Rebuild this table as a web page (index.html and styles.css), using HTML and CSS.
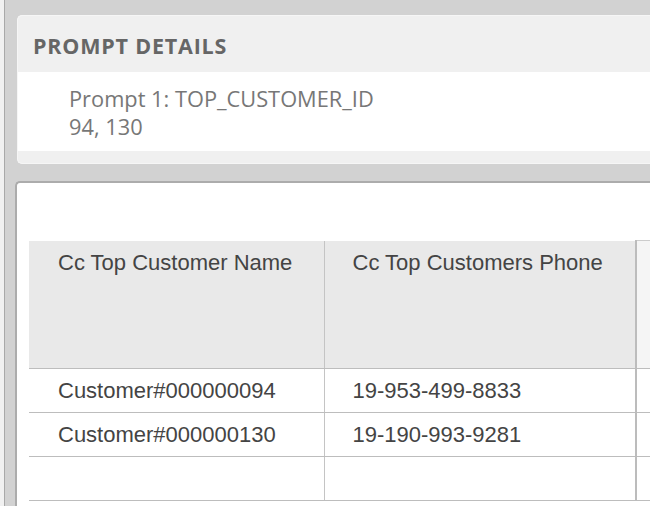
FILE: index.html
```html
<!DOCTYPE html>
<html>
<head>
<meta charset="utf-8">
<link rel="stylesheet" href="styles.css">
</head>
<body>
<div class="page">
  <div class="edge"></div>
  <div class="main">
    <section class="prompt-panel">
      <div class="prompt-head">PROMPT DETAILS</div>
      <div class="prompt-body">
        <div class="prompt-line">Prompt 1: TOP_CUSTOMER_ID</div>
        <div class="prompt-line">94, 130</div>
      </div>
      <div class="prompt-foot"></div>
    </section>
    <section class="grid-panel">
      <table class="grid">
        <colgroup>
          <col class="c1"><col class="c2"><col class="c3">
        </colgroup>
        <thead>
          <tr>
            <th class="cell first">Cc Top Customer Name</th>
            <th class="cell">Cc Top Customers Phone</th>
            <th class="cell extra"></th>
          </tr>
        </thead>
        <tbody>
          <tr>
            <td class="cell first">Customer#000000094</td>
            <td class="cell">19-953-499-8833</td>
            <td class="cell extra-body"></td>
          </tr>
          <tr>
            <td class="cell first">Customer#000000130</td>
            <td class="cell">19-190-993-9281</td>
            <td class="cell extra-body"></td>
          </tr>
          <tr>
            <td class="cell first">&nbsp;</td>
            <td class="cell">&nbsp;</td>
            <td class="cell extra-body"></td>
          </tr>
        </tbody>
      </table>
    </section>
  </div>
</div>
</body>
</html>
```

FILE: styles.css
```css
html, body {
  margin: 0;
  padding: 0;
  width: 650px;
  height: 506px;
  overflow: hidden;
  background: #d2d2d2;
}

.page {
  display: flex;
  height: 506px;
}

.edge {
  width: 4px;
  flex: none;
  background: #f1f1f1;
  border-right: 1px solid #a9a9a9;
}

.main {
  flex: 1;
  min-width: 0;
  padding: 15px 0 0 10px;
  display: flex;
  flex-direction: column;
}

.prompt-panel {
  margin-left: 2px;
  background: #ffffff;
  border: 1px solid #f6f6f6;
  border-right: none;
  border-radius: 5px 0 0 5px;
  overflow: hidden;
}

.prompt-head {
  height: 56px;
  box-sizing: border-box;
  padding: 16px 0 0 15px;
  background: #f0f0f0;
  font-family: "Open Sans", "DejaVu Sans", sans-serif;
  font-weight: 700;
  font-size: 21.5px;
  letter-spacing: 0.8px;
  line-height: 28px;
  color: #666666;
}

.prompt-body {
  padding: 13px 0 10px 51px;
  font-family: "Open Sans", "DejaVu Sans", sans-serif;
  font-size: 21.8px;
  line-height: 28px;
  color: #777777;
}

.prompt-foot {
  height: 12px;
  background: #f0f0f0;
}

.grid-panel {
  margin-top: 17px;
  flex: 1;
  background: #ffffff;
  border-top: 2px solid #acacac;
  border-left: 2px solid #acacac;
  border-radius: 5px 0 0 0;
  padding: 57px 0 0 12px;
  overflow: hidden;
}

.grid {
  border-collapse: collapse;
  table-layout: fixed;
  width: 810px;
  font-family: "Liberation Sans", Arial, sans-serif;
  font-size: 22px;
  color: #444444;
}

.c1 { width: 295px; }
.c2 { width: 312px; }
.c3 { width: 203px; }

.cell {
  text-align: left;
  font-weight: 400;
  padding: 9px 0 9px 28px;
  line-height: 25px;
  border-bottom: 1px solid #bdbdbd;
  border-left: 1px solid #c4c4c4;
  white-space: nowrap;
}

.cell.first {
  border-left: none;
  padding-left: 29px;
}

thead .cell {
  height: 109px;
  vertical-align: top;
  background: #e9e9e9;
  border-bottom: 1px solid #bdbdbd;
}

thead .cell.extra {
  background: #f5f5f5;
  border-left: 2px solid #bcbcbc;
  border-top: 1px solid #cccccc;
}

.extra-body {
  border-left: 2px solid #bcbcbc;
}
```
